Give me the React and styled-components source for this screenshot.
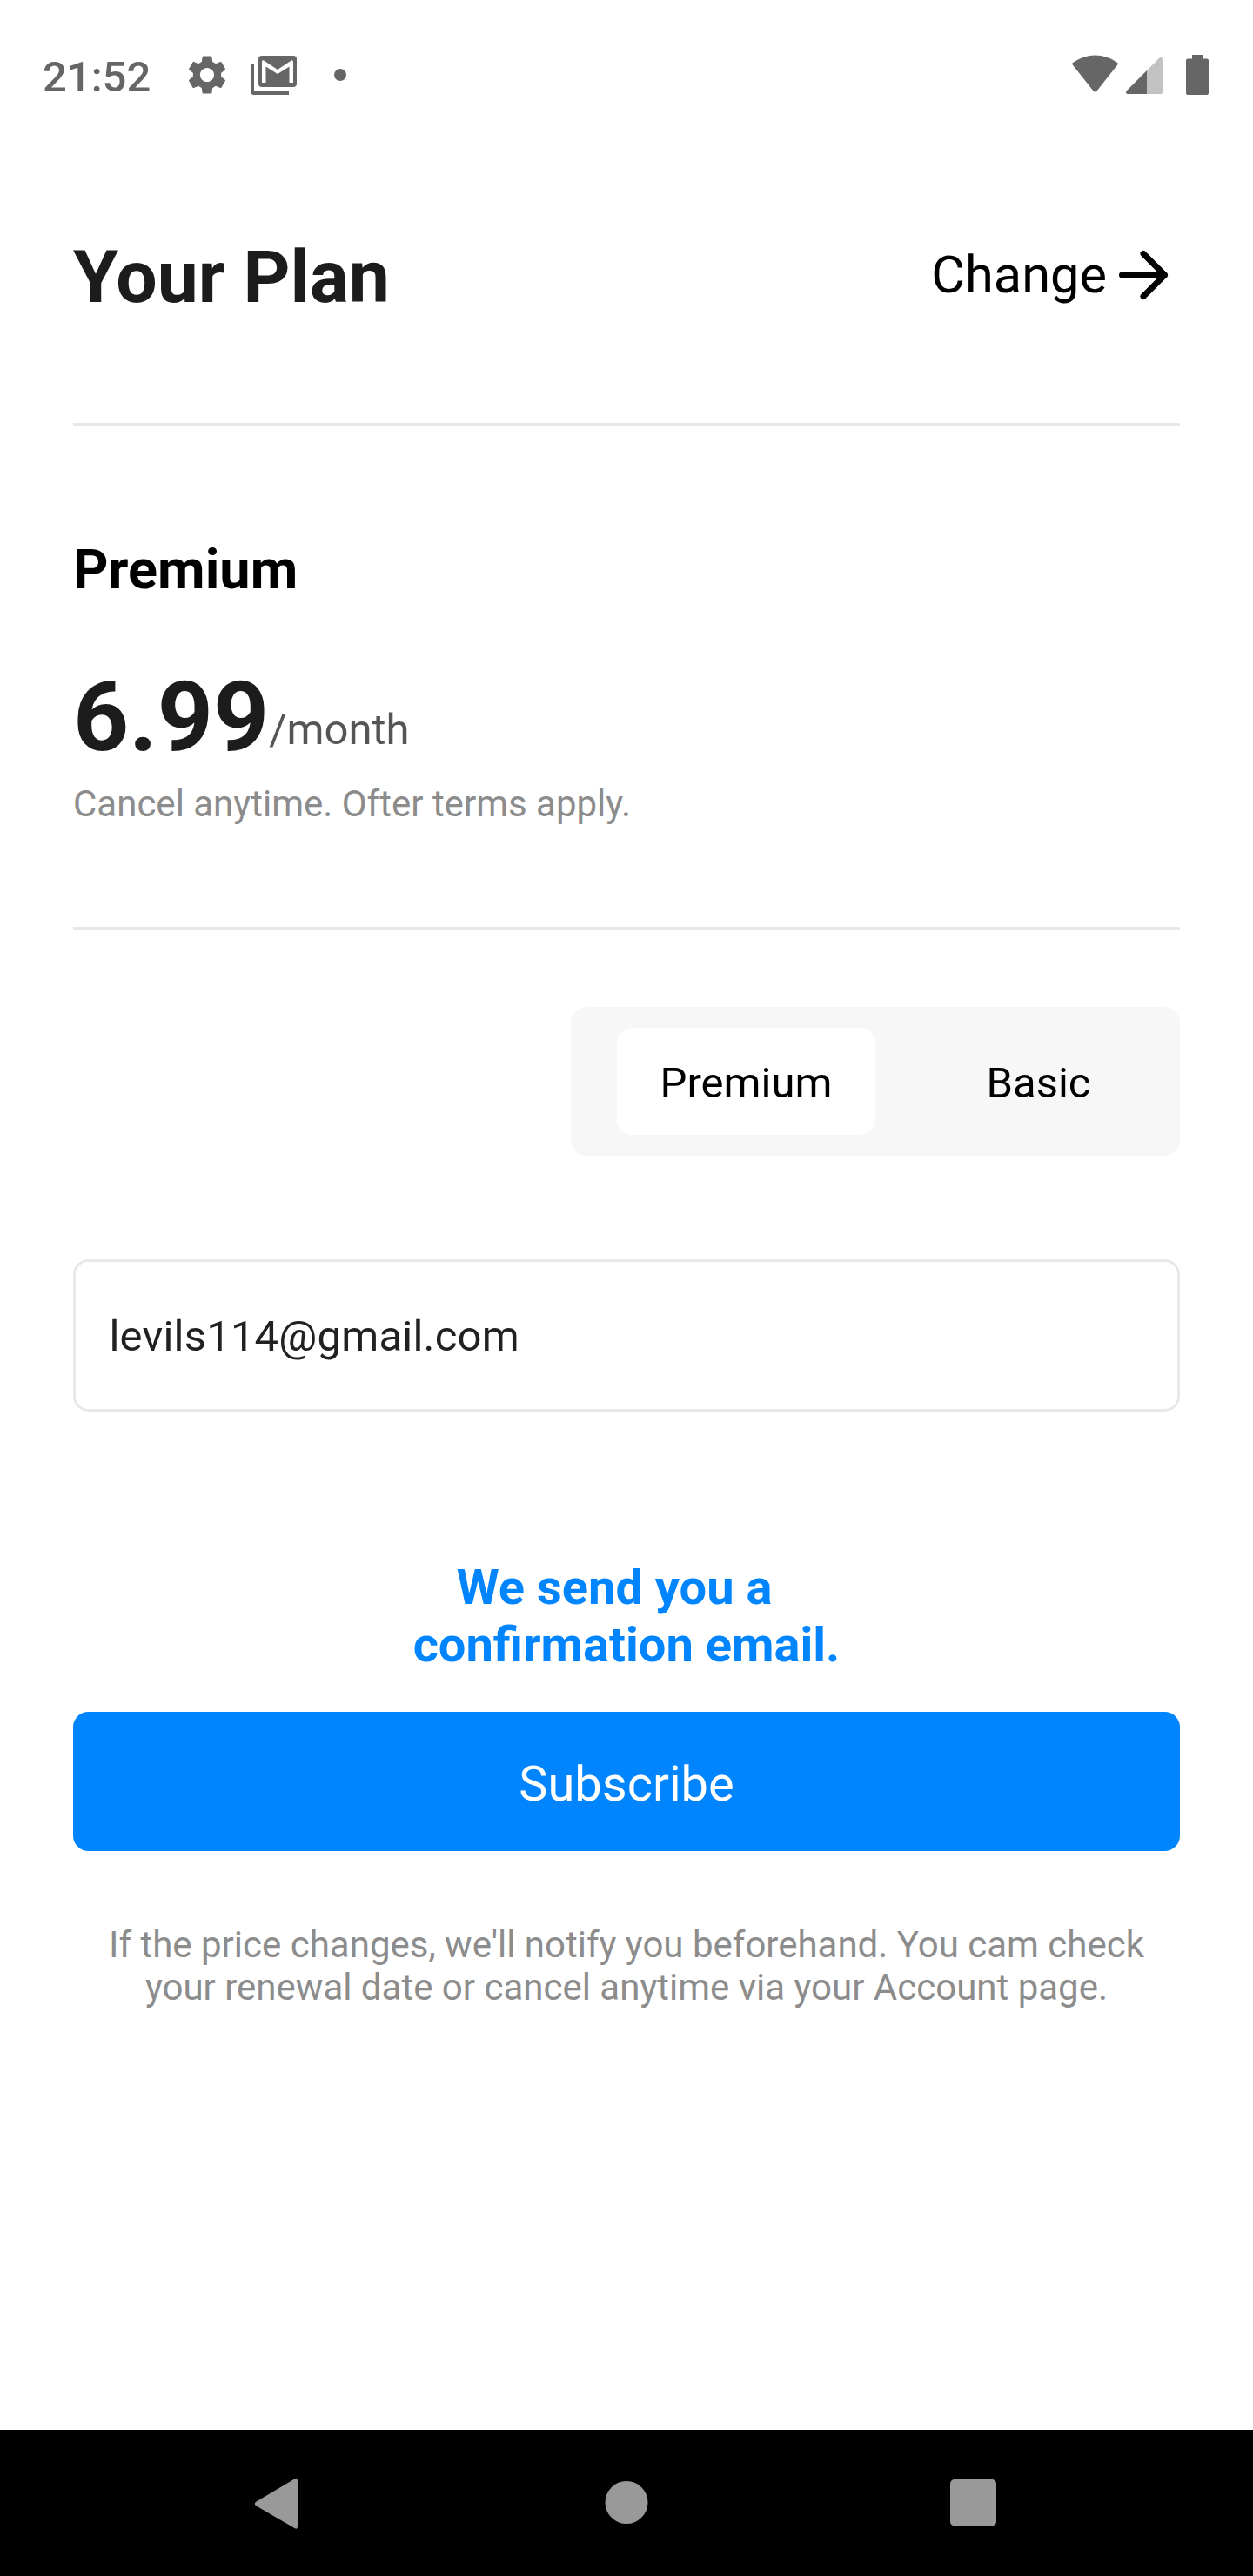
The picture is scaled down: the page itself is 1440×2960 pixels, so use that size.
import React, { useState } from "react";
import styled, { createGlobalStyle } from "styled-components";

const GlobalStyle = createGlobalStyle`
  * { box-sizing: border-box; }
  body {
    margin: 0;
    background: #fff;
    font-family: Roboto, "Liberation Sans", sans-serif;
  }
  button, input { font-family: inherit; }
  svg { display: block; flex: none; }
`;

const Screen = styled.div`
  display: flex;
  flex-direction: column;
  width: 1440px;
  height: 2960px;
  background: #fff;
`;

const StatusBar = styled.header`
  display: flex;
  align-items: center;
  justify-content: space-between;
  height: 172px;
  padding: 0 49px;
  color: #666;
`;

const StatusGroup = styled.div`
  display: flex;
  align-items: center;
`;

const Clock = styled.span`
  font-size: 49px;
  font-weight: 500;
  line-height: 57px;
  width: 162px;
  padding-top: 4px;
`;

const Content = styled.main`
  display: flex;
  flex-direction: column;
  padding: 98px 84px 0;
`;

const TitleRow = styled.div`
  display: flex;
  justify-content: space-between;
  align-items: flex-start;
`;

const Title = styled.h1`
  margin: 0;
  font-size: 84px;
  font-weight: 700;
  line-height: 98px;
  color: #1c1c1c;
`;

const ChangeButton = styled.button`
  display: flex;
  align-items: center;
  height: 91px;
  padding: 0;
  border: 0;
  background: none;
  color: #000;
  font-size: 59.5px;
  line-height: 70px;
`;

const Divider = styled.hr`
  width: 100%;
  height: 4px;
  margin: ${(p) => p.$top}px 0 0;
  border: 0;
  background: #e8e8e8;
`;

const PlanName = styled.h2`
  margin: 127px 0 0;
  font-size: 63px;
  font-weight: 700;
  line-height: 75px;
  color: #000;
`;

const PriceRow = styled.div`
  display: flex;
  align-items: flex-start;
  margin-top: 66px;
`;

const Price = styled.span`
  font-size: 112px;
  font-weight: 700;
  line-height: 131px;
  color: #1c1c1c;
`;

const Period = styled.span`
  margin-top: 52px;
  font-size: 49px;
  line-height: 57px;
  color: #555;
`;

const Terms = styled.p`
  margin: 10px 0 0;
  font-size: 42px;
  line-height: 49px;
  color: #8c8c8c;
`;

const Segmented = styled.div`
  display: flex;
  align-self: flex-end;
  align-items: center;
  justify-content: space-between;
  width: 700px;
  height: 171px;
  margin-top: 88px;
  padding: 0 53px;
  border-radius: 17.5px;
  background: #f7f7f7;
`;

const Segment = styled.button`
  height: 123px;
  padding: 4px 49.5px 0;
  border: 0;
  border-radius: 17.5px;
  background: ${(p) => (p.$active ? "#fff" : "transparent")};
  color: #000;
  font-size: 49px;
  line-height: 57px;
`;

const EmailInput = styled.input`
  width: 100%;
  height: 175px;
  margin-top: 119px;
  padding: 2px 38.5px 0;
  border: 3.5px solid #e8e8e8;
  border-radius: 17.5px;
  outline: 0;
  background: #fff;
  color: #212121;
  font-size: 49px;
  letter-spacing: 0.2px;
`;

const Confirmation = styled.p`
  width: 500px;
  margin: 169px auto 0;
  font-size: 56px;
  font-weight: 700;
  line-height: 66px;
  text-align: center;
  color: #0085ff;
`;

const SubscribeButton = styled.button`
  height: 160px;
  margin-top: 44px;
  padding: 6px 0 0;
  border: 0;
  border-radius: 17.5px;
  background: #0085ff;
  color: #fff;
  font-size: 56px;
  line-height: 66px;
`;

const FinePrint = styled.p`
  margin: 83px 0 0;
  font-size: 42px;
  line-height: 49px;
  text-align: center;
  color: #8c8c8c;
`;

const NavBar = styled.nav`
  display: flex;
  align-items: center;
  justify-content: space-around;
  height: 168px;
  margin-top: auto;
  padding: 0 120px;
  background: #000;
  color: #999;
`;

const GearIcon = () => (
  <svg width="54" height="54" viewBox="0 0 24 24" fill="currentColor">
    <path d="M19.14 12.94c.04-.3.06-.61.06-.94 0-.32-.02-.64-.07-.94l2.03-1.58a.49.49 0 0 0 .12-.61l-1.92-3.32a.488.488 0 0 0-.59-.22l-2.39.96c-.5-.38-1.03-.7-1.62-.94l-.36-2.54a.484.484 0 0 0-.48-.41h-3.84c-.24 0-.43.17-.47.41l-.36 2.54c-.59.24-1.13.57-1.62.94l-2.39-.96c-.22-.08-.47 0-.59.22L2.74 8.87c-.12.21-.08.47.12.61l2.03 1.58c-.05.3-.09.63-.09.94s.02.64.07.94l-2.03 1.58a.49.49 0 0 0-.12.61l1.92 3.32c.12.22.37.29.59.22l2.39-.96c.5.38 1.03.7 1.62.94l.36 2.54c.05.24.24.41.48.41h3.84c.24 0 .44-.17.47-.41l.36-2.54c.59-.24 1.13-.56 1.62-.94l2.39.96c.22.08.47 0 .59-.22l1.92-3.32c.12-.22.07-.47-.12-.61l-2.01-1.58zM12 15.6c-1.98 0-3.6-1.62-3.6-3.6s1.62-3.6 3.6-3.6 3.6 1.62 3.6 3.6-1.62 3.6-3.6 3.6z" />
  </svg>
);

const MailStackIcon = styled((props) => (
  <svg width="53" height="45" viewBox="0 0 53 45" {...props}>
    <path d="M0 9H4V41H44V45H4Q0 45 0 41Z" fill="currentColor" />
    <rect x="9" y="0" width="44" height="36" rx="4" fill="currentColor" />
    <path
      d="M13 31V7Q13 4 16 6L31 16L46 6Q49 4 49 7V31H44.500V12.500L31 21L17.500 12.500V31Z"
      fill="#fff"
    />
  </svg>
))`
  margin-left: 23px;
`;

const Dot = styled.span`
  width: 14px;
  height: 14px;
  margin-left: 43px;
  border-radius: 50%;
  background: currentColor;
`;

const WifiIcon = () => (
  <svg width="53" height="46" viewBox="0 0 53 46" fill="currentColor">
    <path d="M1 9Q13 .5 26.500 .5T52 9Q53.500 10 52.300 11.500L28.500 41.500Q26.500 43.500 24.500 41.500L.7 11.500Q-.5 10 1 9Z" />
  </svg>
);

const SignalIcon = styled((props) => (
  <svg width="42" height="46" viewBox="0 0 42 46" fill="currentColor" {...props}>
    <path d="M24 18L38.500 3.500Q40 2 41.500 3.500Q42 4 42 5V43Q42 45 40 45H24Z" fill="#c2c2c2" />
    <path d="M24 18V45H2Q0 45 0 43Q0 42 1 41Z" />
  </svg>
))`
  margin-left: 9px;
`;

const BatteryIcon = styled((props) => (
  <svg width="26" height="46" viewBox="0 0 26 46" fill="currentColor" {...props}>
    <path d="M7 0H19V4.500H24Q26 4.500 26 6.500V44Q26 46 24 46H2Q0 46 0 44V6.500Q0 4.500 2 4.500H7Z" />
  </svg>
))`
  margin: 0 2px 0 27px;
`;

const ArrowRightIcon = () => (
  <svg
    width="84"
    height="84"
    viewBox="0 0 24 24"
    fill="none"
    stroke="currentColor"
    strokeWidth="2"
    strokeLinecap="round"
    strokeLinejoin="round"
  >
    <path d="M5 12H19M12 5L19 12L12 19" />
  </svg>
);

const NavIcon = ({ children }) => (
  <svg width="60" height="60" viewBox="0 0 60 60" fill="currentColor">
    {children}
  </svg>
);

const plans = ["Premium", "Basic"];

export default function App() {
  const [plan, setPlan] = useState("Premium");
  const [email, setEmail] = useState("levils114@gmail.com");

  return (
    <>
      <GlobalStyle />
      <Screen>
        <StatusBar>
          <StatusGroup>
            <Clock>21:52</Clock>
            <GearIcon />
            <MailStackIcon />
            <Dot />
          </StatusGroup>
          <StatusGroup>
            <WifiIcon />
            <SignalIcon />
            <BatteryIcon />
          </StatusGroup>
        </StatusBar>

        <Content>
          <TitleRow>
            <Title>Your Plan</Title>
            <ChangeButton>
              Change
              <ArrowRightIcon />
            </ChangeButton>
          </TitleRow>
          <Divider $top={118} />

          <PlanName>Premium</PlanName>
          <PriceRow>
            <Price>6.99</Price>
            <Period>/month</Period>
          </PriceRow>
          <Terms>Cancel anytime. Ofter terms apply.</Terms>
          <Divider $top={117} />

          <Segmented>
            {plans.map((name) => (
              <Segment key={name} $active={name === plan} onClick={() => setPlan(name)}>
                {name}
              </Segment>
            ))}
          </Segmented>

          <EmailInput value={email} onChange={(e) => setEmail(e.target.value)} />

          <Confirmation>
            We send you a&nbsp;&nbsp;
            <br />
            confirmation email.
          </Confirmation>
          <SubscribeButton>Subscribe</SubscribeButton>
          <FinePrint>
            If the price changes, we'll notify you beforehand. You cam check
            <br />
            your renewal date or cancel anytime via your Account page.
          </FinePrint>
        </Content>

        <NavBar>
          <NavIcon>
            <path d="M52 4.500V57Q52 61 48.500 59L4.500 33.500Q1 31 4.500 28.500L48.500 2.500Q52 .5 52 4.500Z" />
          </NavIcon>
          <NavIcon>
            <circle cx="30" cy="29.500" r="24.500" />
          </NavIcon>
          <NavIcon>
            <rect x="2" y="3" width="53" height="53.500" rx="5" />
          </NavIcon>
        </NavBar>
      </Screen>
    </>
  );
}
